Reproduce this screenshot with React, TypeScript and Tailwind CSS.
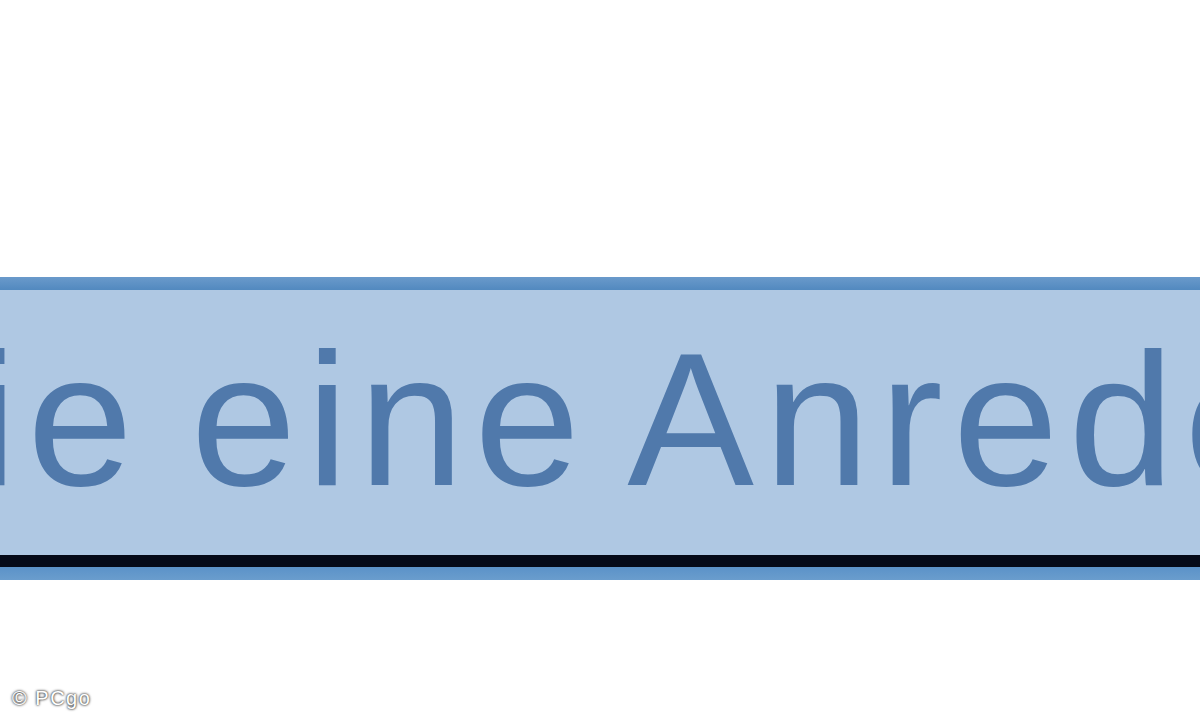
export default function App() {
  return (
    <div className="relative h-[720px] w-[1200px] overflow-hidden bg-white">
      {/* selected field */}
      <div className="pt-[277px]">
        <div className="h-[13px] bg-gradient-to-b from-[#6a9acb] to-[#5289bf]" />
        <div className="h-[265px] overflow-hidden bg-[#afc8e3] pt-[34px]">
          <div
            className="-ml-[25px] whitespace-pre text-[190px] leading-none tracking-[10px] text-[#5079ab] [word-spacing:-15px]"
            style={{ fontFamily: '"Liberation Sans", Arial, sans-serif' }}
          >
            ie eine Anrede
          </div>
        </div>
        <div className="h-[12px] bg-[#050a18]" />
        <div className="h-[13px] bg-gradient-to-b from-[#5b92c8] to-[#6a9dcd]" />
      </div>

      {/* watermark */}
      <div
        className="absolute bottom-[12px] left-[12px] text-[20px] leading-none tracking-[1.5px] text-white [text-shadow:0_0_2px_#333,0_0_3px_#444]"
        style={{ fontFamily: '"Liberation Sans", Arial, sans-serif' }}
      >
        © PCgo
      </div>
    </div>
  );
}
